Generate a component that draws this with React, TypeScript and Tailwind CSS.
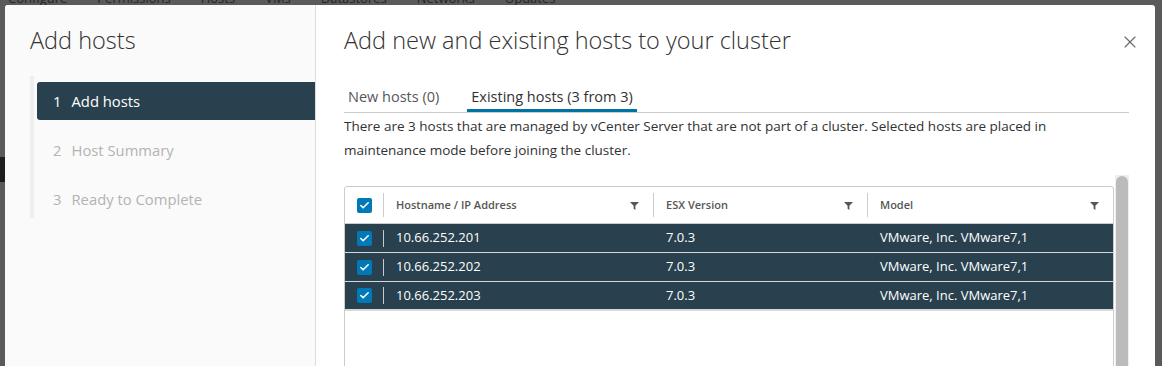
import { Check, X } from "lucide-react";

const hosts = [
  { ip: "10.66.252.201", esx: "7.0.3", model: "VMware, Inc. VMware7,1" },
  { ip: "10.66.252.202", esx: "7.0.3", model: "VMware, Inc. VMware7,1" },
  { ip: "10.66.252.203", esx: "7.0.3", model: "VMware, Inc. VMware7,1" },
];

const steps = ["Add hosts", "Host Summary", "Ready to Complete"];

function Box() {
  return (
    <span className="w-[15px] h-[15px] rounded-[2px] bg-[#0079b8] flex items-center justify-center">
      <Check size={11} strokeWidth={3.5} className="text-white" />
    </span>
  );
}

function Funnel() {
  return (
    <svg width="9" height="9" viewBox="0 0 10 10" className="text-[#565656]">
      <path d="M0 1h10L6 5.2V10L4 8.6V5.2z" fill="currentColor" />
    </svg>
  );
}

export default function App() {
  return (
    <div
      className="relative h-[366px] w-[1162px] overflow-hidden bg-[#5a5a5a]"
      style={{ fontFamily: "'Open Sans', 'Noto Sans', sans-serif" }}
    >
      {/* page behind the backdrop */}
      <div className="flex gap-[30px] pl-[8px] -mt-[12px] text-[13px] leading-[20px] text-[#262626]">
        {["Configure", "Permissions", "Hosts", "VMs", "Datastores", "Networks", "Updates"].map((t) => (
          <span key={t}>{t}</span>
        ))}
      </div>
      <div className="mt-[149px] h-[25px] w-[5px] bg-[#1d1d1d]" />

      {/* modal */}
      <div className="absolute left-[5px] top-[5px] right-[7px] h-[400px] flex rounded-[3px] bg-white overflow-hidden">
        <aside className="w-[311px] shrink-0 bg-[#fafafa] border-r border-[#dddddd] pt-[20px]">
          <h2 className="pl-[25px] text-[23.5px] font-light text-[#313131] leading-[30px]">Add hosts</h2>
          <div className="ml-[25px] mt-[21px] border-l-[4px] border-[#eeeeee] pt-[6px]">
            {steps.map((s, i) => (
              <div
                key={s}
                className={`ml-[3px] h-[38px] mb-[11px] flex items-center pl-[16px] gap-[10px] text-[14.8px] rounded-l-[3px] ${
                  i === 0 ? "bg-[#29414e] text-white" : "text-[#b3b3b3]"
                }`}
              >
                <span>{i + 1}</span>
                <span>{s}</span>
              </div>
            ))}
          </div>
        </aside>

        <main className="flex-1 pl-[28px] pr-[16px] pt-[20px]">
          <div className="flex items-start justify-between">
            <h1 className="text-[23.5px] font-light text-[#313131] leading-[30px]">
              Add new and existing hosts to your cluster
            </h1>
            <X size={20} strokeWidth={1.3} className="text-[#666666] mt-[7px] mr-[-1px]" />
          </div>

          <div className="mt-[24px] mr-[10px] flex gap-[32px] border-b border-[#cccccc] pl-[4px] text-[14.5px] h-[34px]">
            <span className="pt-[7px] text-[#575757]">New hosts (0)</span>
            <span className="px-[4px] -ml-[4px] pt-[7px] text-[#313131] border-b-[3px] border-[#0072a3]">
              Existing hosts (3 from 3)
            </span>
          </div>

          <p className="mt-[1px] text-[13.5px] leading-[24px] text-[#313131] pr-[60px]">
            There are 3 hosts that are managed by vCenter Server that are not part of a cluster. Selected hosts are placed in
            maintenance mode before joining the cluster.
          </p>

          <div className="mt-[24px] flex gap-[1px]">
            <div className="w-[770px] h-[200px] border border-[#cccccc] rounded-t-[3px] overflow-hidden">
              <div className="flex h-[37px] items-center text-[11px] font-semibold text-[#565656] border-b border-[#cccccc]">
                <div className="w-[38px] flex items-center justify-center h-full">
                  <Box />
                </div>
                <div className="w-[270px] flex items-center justify-between border-l border-[#cccccc] h-[24px] pl-[12px] pr-[14px]">
                  <span>Hostname / IP Address</span>
                  <Funnel />
                </div>
                <div className="w-[214px] flex items-center justify-between border-l border-[#cccccc] h-[24px] pl-[12px] pr-[14px]">
                  <span>ESX Version</span>
                  <Funnel />
                </div>
                <div className="flex-1 flex items-center justify-between border-l border-[#cccccc] h-[24px] pl-[12px] pr-[14px]">
                  <span>Model</span>
                  <Funnel />
                </div>
              </div>
              {hosts.map((h, i) => (
                <div
                  key={h.ip}
                  className={`flex h-[29px] items-center bg-[#29414e] text-white text-[13px] ${
                    i === hosts.length - 1 ? "border-b-[2px] border-[#d8d8d8]" : "border-b border-[#d8d8d8]"
                  }`}
                >
                  <div className="w-[38px] flex items-center justify-center">
                    <Box />
                  </div>
                  <div className="w-[270px] border-l border-[#c8c8c8] h-[17px] flex items-center pl-[12px]">{h.ip}</div>
                  <div className="w-[214px] pl-[13px]">{h.esx}</div>
                  <div className="flex-1 pl-[13px]">{h.model}</div>
                </div>
              ))}
            </div>
            <div className="w-[14px] -mt-[11px] bg-[#eeeeee] p-[1px]">
              <div className="h-full rounded-t-[6px] bg-[#bbbbbb]" />
            </div>
          </div>
        </main>
      </div>
    </div>
  );
}
